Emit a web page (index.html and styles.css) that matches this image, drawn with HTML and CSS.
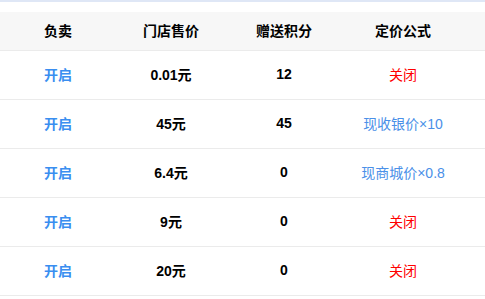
FILE: index.html
```html
<!DOCTYPE html>
<html>
<head>
<meta charset="utf-8">
<link rel="stylesheet" href="styles.css">
</head>
<body>
<div class="page">
  <div class="table">
    <div class="row head">
      <div class="cell">负卖</div>
      <div class="cell">门店售价</div>
      <div class="cell">赠送积分</div>
      <div class="cell">定价公式</div>
    </div>
    <div class="row">
      <div class="cell on">开启</div>
      <div class="cell num">0.01元</div>
      <div class="cell num">12</div>
      <div class="cell off">关闭</div>
    </div>
    <div class="row">
      <div class="cell on">开启</div>
      <div class="cell num">45元</div>
      <div class="cell num">45</div>
      <div class="cell formula">现收银价×10</div>
    </div>
    <div class="row">
      <div class="cell on">开启</div>
      <div class="cell num">6.4元</div>
      <div class="cell num">0</div>
      <div class="cell formula">现商城价×0.8</div>
    </div>
    <div class="row">
      <div class="cell on">开启</div>
      <div class="cell num">9元</div>
      <div class="cell num">0</div>
      <div class="cell off">关闭</div>
    </div>
    <div class="row">
      <div class="cell on">开启</div>
      <div class="cell num">20元</div>
      <div class="cell num">0</div>
      <div class="cell off">关闭</div>
    </div>
  </div>
</div>
</body>
</html>
```
FILE: styles.css
```css
html, body {
  margin: 0;
  padding: 0;
  background: #ffffff;
}
body {
  font-family: "Liberation Sans", "Noto Sans CJK SC", sans-serif;
  font-size: 14px;
  color: #000000;
}
.page {
  border-top: 2px solid #dfe7f6;
  padding-top: 10px;
}
.table {
  display: flex;
  flex-direction: column;
}
.row {
  display: grid;
  grid-template-columns: 116px 110px 116px 122px 1fr;
  height: 48px;
  border-bottom: 1px solid #ebebeb;
  align-items: center;
}
.row.head {
  height: 38px;
  background: #f7f7f7;
  font-weight: bold;
}
.cell {
  text-align: center;
  white-space: nowrap;
  padding-bottom: 3px;
}
.on {
  color: #3a8ef0;
  font-weight: 600;
}
.num {
  font-weight: bold;
}
.off {
  color: #ff0000;
}
.formula {
  color: #4a90e8;
}
```
